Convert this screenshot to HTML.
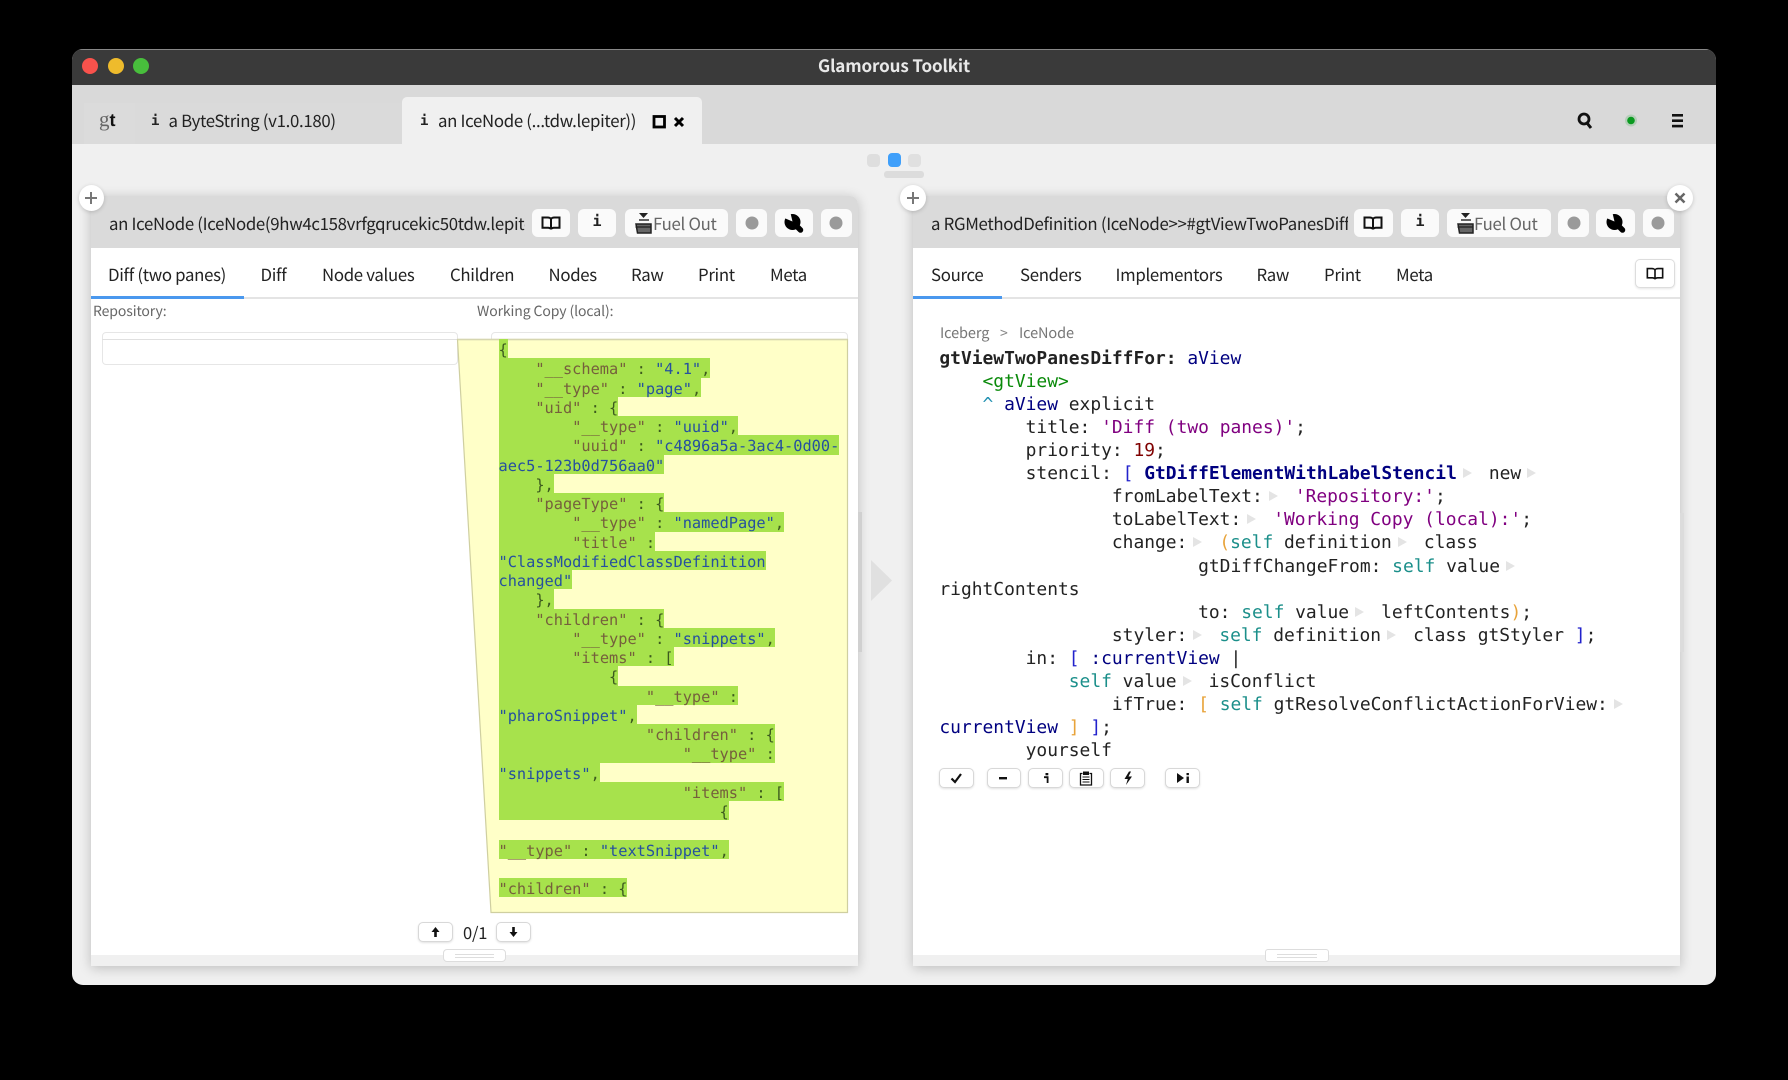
<!DOCTYPE html>
<html>
<head>
<meta charset="utf-8">
<title>Glamorous Toolkit</title>
<style>
html,body{margin:0;padding:0;width:1788px;height:1080px;background:#000;overflow:hidden}
*{box-sizing:border-box}
body{font-family:"Noto Sans CJK SC","Liberation Sans",sans-serif;text-rendering:geometricPrecision;color:#222}
.b{position:absolute}
.t{position:absolute;white-space:pre;line-height:24px;height:24px;font-size:16.8px;letter-spacing:-.3px}
.btn{position:absolute;background:#fafafa;border-radius:6px;top:209px;height:28px}
.ab{position:absolute;top:768px;height:20px;background:#fff;border:1px solid #d8d8d8;border-radius:5px;box-shadow:0 1px 2px rgba(0,0,0,.12)}
pre{margin:0}
#code{position:absolute;left:939.4px;top:346.8px;font-family:"DejaVu Sans Mono","Liberation Mono",monospace;font-size:17.92px;line-height:23.08px;color:#222}
#code i{display:inline-block;width:32px;height:11px;position:relative}
#code i:after{content:"";position:absolute;left:6px;top:0;border-left:9px solid #e4e4e4;border-top:5.5px solid transparent;border-bottom:5.5px solid transparent}
#code i.e{width:18px}
#code b{font-weight:bold}
.n{color:#000080}.tl{color:#1b8f8a}.pu{color:#800080}.og{color:#e8a33a}.bl{color:#2222cc}
#json{position:absolute;left:498.5px;top:339px;font-family:"DejaVu Sans Mono","Liberation Mono",monospace;font-size:15.3px;color:#3c5a1e}
#json div{position:relative;height:19.25px;line-height:19.25px;white-space:pre}
#json span{display:inline-block;height:19.25px;line-height:22px;background:#a7e24c;vertical-align:top}
#json u{text-decoration:none;color:#75603c}
#json s{text-decoration:none;color:#25509f}
</style>
</head>
<body>
<!-- window -->
<div class="b" style="left:72px;top:49px;width:1644px;height:936px;background:#f0f0f0;border-radius:11px;overflow:hidden">
  <div class="b" style="left:0;top:0;width:1644px;height:36px;background:#3a3a3a;border-top:1px solid #888"></div>
  <div class="b" style="left:0;top:36px;width:1644px;height:59px;background:#d9d9d9"></div>
  <div class="b" style="left:12px;top:54px;width:51px;height:41px;background:#dbdbdb"></div>
  <div class="b" style="left:63px;top:54px;width:267px;height:41px;background:#dadada"></div>
</div>
<div class="b" style="left:82px;top:58px;width:16px;height:16px;border-radius:50%;background:#f9524c"></div>
<div class="b" style="left:108px;top:58px;width:16px;height:16px;border-radius:50%;background:#eebb2c"></div>
<div class="b" style="left:133px;top:58px;width:16px;height:16px;border-radius:50%;background:#48be3c"></div>
<div class="t" style="left:72px;width:1644px;top:53px;text-align:center;color:#e8e8e8;font-weight:bold;font-size:17px;letter-spacing:-.12px">Glamorous Toolkit</div>

<!-- tabs -->
<div class="b" style="left:402px;top:97px;width:300px;height:47px;background:#f0f0f0;border-radius:5px 5px 0 0"></div>
<div class="t" style="left:99px;top:107px;font-family:'Liberation Serif',serif;font-size:21px;letter-spacing:0;color:#666">g<b style="color:#111;font-family:'Liberation Sans',sans-serif;font-size:18px">t</b></div>
<div class="t" style="left:151px;top:109px;font-family:'DejaVu Sans Mono',monospace;font-weight:bold;font-size:14px;letter-spacing:0;color:#222">i</div>
<div class="t" style="left:168.5px;top:108px">a ByteString (v1.0.180)</div>
<div class="t" style="left:420px;top:109px;font-family:'DejaVu Sans Mono',monospace;font-weight:bold;font-size:14px;letter-spacing:0;color:#222">i</div>
<div class="t" style="left:438px;top:108px">an IceNode (...tdw.lepiter))</div>
<svg class="b" style="left:650px;top:112px" width="40" height="20" viewBox="0 0 40 20"><rect x="4" y="4.5" width="10.5" height="10.5" fill="none" stroke="#000" stroke-width="2.8"/><path d="M25 6l8 8M33 6l-8 8" stroke="#000" stroke-width="3" fill="none"/></svg>

<!-- top right icons -->
<svg class="b" style="left:1570px;top:106px" width="125" height="30" viewBox="0 0 125 30">
<circle cx="14" cy="13" r="5" fill="none" stroke="#111" stroke-width="2.8"/><path d="M17 17l4 5" stroke="#111" stroke-width="3"/>
<circle cx="61" cy="14.5" r="6" fill="#0a9a20" opacity=".18"/><circle cx="61" cy="14.5" r="3.8" fill="#0a9a20"/>
<rect x="102" y="8" width="11" height="2.6" fill="#111"/><rect x="102" y="13.4" width="11" height="2.6" fill="#111"/><rect x="102" y="18.8" width="11" height="2.6" fill="#111"/>
</svg>

<!-- page dots -->
<div class="b" style="left:867px;top:154px;width:13px;height:13px;border-radius:4px;background:#dedede"></div>
<div class="b" style="left:887.5px;top:153px;width:13px;height:14px;border-radius:4px;background:#3f9ffa"></div>
<div class="b" style="left:908px;top:154px;width:13px;height:13px;border-radius:4px;background:#e0e0e0"></div>
<div class="b" style="left:884px;top:171px;width:40px;height:7px;border-radius:3px;background:#dcdcdc"></div>

<!-- LEFT PANE -->
<div class="b" style="left:91px;top:196px;width:767px;height:770px;background:#fff;box-shadow:0 2px 12px rgba(0,0,0,.22);border-radius:8px 8px 0 0;overflow:hidden">
  <div class="b" style="left:0;top:0;width:767px;height:52px;background:#dadada"></div>
  <div class="b" style="left:0;top:101px;width:767px;height:2px;background:#e4e4e4"></div>
  <div class="b" style="left:0;top:100px;width:153px;height:3px;background:#4a98ee"></div>
  <div class="b" style="left:0;top:759px;width:767px;height:11px;background:#f0f0f0"></div>
</div>
<div class="b" style="left:858px;top:512px;width:4px;height:140px;background:#d0d0d0"></div>
<div class="t" style="left:109px;top:211px;width:416px;overflow:hidden">an IceNode (IceNode(9hw4c158vrfgqrucekic50tdw.lepiter))</div>
<div class="btn" style="left:532px;width:38px"></div>
<div class="btn" style="left:578px;width:38px"></div>
<div class="btn" style="left:625px;width:103px"></div>
<div class="btn" style="left:736px;width:31px"></div>
<div class="btn" style="left:775px;width:38px"></div>
<div class="btn" style="left:821px;width:31px"></div>
<svg class="b" style="left:541px;top:214px" width="20" height="18" viewBox="0 0 20 18"><path d="M1.5 3.5h5c1.7 0 3.5.7 3.5 2.2V15.500c0-1-1.500-1.700-3-1.700H1.500zM18.500 3.500h-5c-1.700 0-3.500.7-3.500 2.200V15.500c0-1 1.500-1.700 3-1.700H18.500z" fill="none" stroke="#111" stroke-width="2"/></svg>
<div class="t" style="left:592.5px;top:209px;font-family:'DejaVu Sans Mono',monospace;font-weight:bold;font-size:15px;letter-spacing:0;color:#222">i</div>
<svg class="b" style="left:634px;top:212px" width="20" height="22" viewBox="0 0 20 22"><path d="M5 1h9l-4.500 5z" fill="#222"/><path d="M5 8h10" stroke="#333" stroke-width="1.500"/><path d="M2 12h15v9H3.500z" fill="#666" stroke="#222" stroke-width="1.500"/><path d="M1.500 15h16" stroke="#222" stroke-width="1.300"/></svg>
<div class="t" style="left:653px;top:211px;color:#666">Fuel Out</div>
<svg class="b" style="left:745px;top:216px" width="100" height="14" viewBox="0 0 100 14"><circle cx="7" cy="7" r="6.500" fill="#9a9a9a"/><circle cx="91" cy="7" r="6.500" fill="#9a9a9a"/></svg>
<svg class="b" style="left:784px;top:214px" width="20" height="19" viewBox="0 0 20 19"><circle cx="8.500" cy="8" r="8" fill="#000"/><path d="M10 9.500L16.500 16" stroke="#000" stroke-width="5.500" stroke-linecap="round"/><path d="M8.500 7.500L6.500 -1H-1V3.500z" fill="#fafafa"/></svg>
<div class="b" style="left:78.5px;top:185px;width:25px;height:26px;border-radius:50%;background:#fff;box-shadow:0 1px 4px rgba(0,0,0,.18)"></div>
<svg class="b" style="left:84px;top:191px" width="14" height="14" viewBox="0 0 14 14"><path d="M7 1v12M1 7h12" stroke="#777" stroke-width="2"/></svg>

<div class="t" style="left:108px;top:262px">Diff (two panes)</div>
<div class="t" style="left:260.5px;top:262px">Diff</div>
<div class="t" style="left:322px;top:262px">Node values</div>
<div class="t" style="left:450px;top:262px">Children</div>
<div class="t" style="left:548.5px;top:262px">Nodes</div>
<div class="t" style="left:631px;top:262px">Raw</div>
<div class="t" style="left:698px;top:262px">Print</div>
<div class="t" style="left:770px;top:262px">Meta</div>

<div class="t" style="left:93px;top:299px;font-size:14px;letter-spacing:-.1px;color:#666">Repository:</div>
<div class="t" style="left:477px;top:299px;font-size:14px;letter-spacing:-.1px;color:#666">Working Copy (local):</div>

<!-- diff boxes -->
<div class="b" style="left:102px;top:332px;width:356px;height:33px;background:#fff;border:1px solid #e6e6e6;border-radius:4px"></div>
<div class="b" style="left:102px;top:339px;width:356px;height:1px;background:#e0e0e0"></div>
<div class="b" style="left:491px;top:332px;width:357px;height:10px;background:#fff;border:1px solid #e6e6e6;border-radius:4px 4px 0 0"></div>
<svg class="b" style="left:456px;top:338px" width="394" height="577" viewBox="0 0 394 577">
<path d="M1.5 1.5H391.5V574.5H35z" fill="#ffffc8"/>
<path d="M1.5 1.5H391.5V574.5H35z" fill="none" stroke="#cfcfa0" stroke-width="1.2"/>
<path d="M1.5 1.5h390" stroke="#d6d6b0" stroke-width="1.5"/>
</svg>
<div id="json"><div style="z-index:29"><span>{</span></div><div style="z-index:28"><span>    <u>"__schema"</u> : <s>"4.1"</s>,</span></div><div style="z-index:27"><span>    <u>"__type"</u> : <s>"page"</s>,</span></div><div style="z-index:26"><span>    <u>"uid"</u> : {</span></div><div style="z-index:25"><span>        <u>"__type"</u> : <s>"uuid"</s>,</span></div><div style="z-index:24"><span>        <u>"uuid"</u> : <s>"c4896a5a-3ac4-0d00-</s></span></div><div style="z-index:23"><span><s>aec5-123b0d756aa0"</s></span></div><div style="z-index:22"><span>    },</span></div><div style="z-index:21"><span>    <u>"pageType"</u> : {</span></div><div style="z-index:20"><span>        <u>"__type"</u> : <s>"namedPage"</s>,</span></div><div style="z-index:19"><span>        <u>"title"</u> :</span></div><div style="z-index:18"><span><s>"ClassModifiedClassDefinition</s></span></div><div style="z-index:17"><span><s>changed"</s></span></div><div style="z-index:16"><span>    },</span></div><div style="z-index:15"><span>    <u>"children"</u> : {</span></div><div style="z-index:14"><span>        <u>"__type"</u> : <s>"snippets"</s>,</span></div><div style="z-index:13"><span>        <u>"items"</u> : [</span></div><div style="z-index:12"><span>            {</span></div><div style="z-index:11"><span>                <u>"__type"</u> :</span></div><div style="z-index:10"><span><s>"pharoSnippet"</s>,</span></div><div style="z-index:9"><span>                <u>"children"</u> : {</span></div><div style="z-index:8"><span>                    <u>"__type"</u> :</span></div><div style="z-index:7"><span><s>"snippets"</s>,</span></div><div style="z-index:6"><span>                    <u>"items"</u> : [</span></div><div style="z-index:5"><span>                        {</span></div><div> </div><div style="z-index:3"><span><u>"__type"</u> : <s>"textSnippet"</s>,</span></div><div> </div><div style="z-index:1"><span><u>"children"</u> : {</span></div></div>

<!-- nav -->
<div class="ab" style="left:418px;top:922px;width:35px;height:20px"></div>
<div class="ab" style="left:496px;top:922px;width:35px;height:20px"></div>
<svg class="b" style="left:428px;top:925px" width="96" height="14" viewBox="0 0 96 14"><path d="M7.5 2l-4 5h2.7v5h2.6V7h2.700z" fill="#111"/><path d="M85.500 12l-4-5h2.700V2h2.600v5h2.700z" fill="#111"/></svg>
<div class="t" style="left:463px;top:920px;font-size:16.5px;letter-spacing:-.2px">0/1</div>
<div class="b" style="left:443px;top:949px;width:63px;height:13px;background:#fff;border:1px solid #ddd;border-radius:4px"></div>
<div class="b" style="left:455px;top:954px;width:39px;height:1px;background:#ddd"></div>
<div class="b" style="left:455px;top:957px;width:39px;height:1px;background:#ddd"></div>

<!-- arrow -->
<svg class="b" style="left:871px;top:560px" width="22" height="41" viewBox="0 0 22 41"><path d="M0 0L21 20.500 0 41z" fill="#e0e0e0"/></svg>

<!-- RIGHT PANE -->
<div class="b" style="left:913px;top:196px;width:767px;height:770px;background:#fff;box-shadow:0 2px 12px rgba(0,0,0,.22);border-radius:8px 8px 0 0;overflow:hidden">
  <div class="b" style="left:0;top:0;width:767px;height:52px;background:#dadada"></div>
  <div class="b" style="left:0;top:101px;width:767px;height:2px;background:#e4e4e4"></div>
  <div class="b" style="left:0;top:100px;width:89px;height:3px;background:#4a98ee"></div>
  <div class="b" style="left:0;top:759px;width:767px;height:11px;background:#f0f0f0"></div>
</div>
<div class="b" style="left:1680px;top:513px;width:4px;height:139px;background:#dcdcdc"></div>
<div class="t" style="left:931px;top:211px;width:417px;overflow:hidden">a RGMethodDefinition (IceNode&gt;&gt;#gtViewTwoPanesDiffFor:)</div>
<div class="btn" style="left:1354px;width:39px"></div>
<div class="btn" style="left:1401px;width:38px"></div>
<div class="btn" style="left:1447px;width:104px"></div>
<div class="btn" style="left:1558px;width:31px"></div>
<div class="btn" style="left:1596px;width:39px"></div>
<div class="btn" style="left:1643px;width:31px"></div>
<svg class="b" style="left:1363px;top:214px" width="20" height="18" viewBox="0 0 20 18"><path d="M1.5 3.500h5c1.700 0 3.500.7 3.500 2.200V15.500c0-1-1.500-1.700-3-1.700H1.500zM18.500 3.500h-5c-1.700 0-3.500.7-3.500 2.200V15.500c0-1 1.500-1.700 3-1.700H18.500z" fill="none" stroke="#111" stroke-width="2"/></svg>
<div class="t" style="left:1415.5px;top:209px;font-family:'DejaVu Sans Mono',monospace;font-weight:bold;font-size:15px;letter-spacing:0;color:#222">i</div>
<svg class="b" style="left:1456px;top:212px" width="20" height="22" viewBox="0 0 20 22"><path d="M5 1h9l-4.500 5z" fill="#222"/><path d="M5 8h10" stroke="#333" stroke-width="1.500"/><path d="M2 12h15v9H3.500z" fill="#666" stroke="#222" stroke-width="1.500"/><path d="M1.500 15h16" stroke="#222" stroke-width="1.300"/></svg>
<div class="t" style="left:1474px;top:211px;color:#666">Fuel Out</div>
<svg class="b" style="left:1567px;top:216px" width="100" height="14" viewBox="0 0 100 14"><circle cx="7" cy="7" r="6.500" fill="#9a9a9a"/><circle cx="91" cy="7" r="6.500" fill="#9a9a9a"/></svg>
<svg class="b" style="left:1606px;top:214px" width="20" height="19" viewBox="0 0 20 19"><circle cx="8.500" cy="8" r="8" fill="#000"/><path d="M10 9.500L16.500 16" stroke="#000" stroke-width="5.500" stroke-linecap="round"/><path d="M8.500 7.500L6.500 -1H-1V3.500z" fill="#fafafa"/></svg>
<div class="b" style="left:900px;top:185px;width:26px;height:26px;border-radius:50%;background:#fff;box-shadow:0 1px 4px rgba(0,0,0,.18)"></div>
<svg class="b" style="left:906px;top:191px" width="14" height="14" viewBox="0 0 14 14"><path d="M7 1v12M1 7h12" stroke="#777" stroke-width="2"/></svg>
<div class="b" style="left:1667px;top:185px;width:26px;height:26px;border-radius:50%;background:#fff;box-shadow:0 1px 4px rgba(0,0,0,.18)"></div>
<svg class="b" style="left:1673px;top:191px" width="14" height="14" viewBox="0 0 14 14"><path d="M2.500 2.500l9 9M11.500 2.500l-9 9" stroke="#666" stroke-width="2.500"/></svg>

<div class="t" style="left:931px;top:262px">Source</div>
<div class="t" style="left:1020px;top:262px">Senders</div>
<div class="t" style="left:1115.5px;top:262px">Implementors</div>
<div class="t" style="left:1256.5px;top:262px">Raw</div>
<div class="t" style="left:1324px;top:262px">Print</div>
<div class="t" style="left:1396px;top:262px">Meta</div>
<div class="b" style="left:1635px;top:259px;width:40px;height:29px;background:#fff;border:1px solid #ddd;border-radius:5px;box-shadow:0 1px 2px rgba(0,0,0,.1)"></div>
<svg class="b" style="left:1646px;top:265px" width="18" height="17" viewBox="0 0 20 18"><path d="M1.500 3.500h5c1.700 0 3.500.7 3.500 2.200V15.500c0-1-1.500-1.700-3-1.700H1.500zM18.500 3.500h-5c-1.700 0-3.500.7-3.500 2.200V15.500c0-1 1.500-1.700 3-1.700H18.500z" fill="none" stroke="#111" stroke-width="1.800"/></svg>

<div class="t" style="left:940px;top:321px;font-size:14.5px;letter-spacing:-.1px;color:#777">Iceberg</div>
<div class="t" style="left:1000px;top:321px;font-size:14px;color:#888">&gt;</div>
<div class="t" style="left:1019px;top:321px;font-size:14.5px;letter-spacing:-.1px;color:#777">IceNode</div>

<pre id="code"><b>gtViewTwoPanesDiffFor:</b> <span class="n">aView</span>
    <span style="color:#0a8a0a">&lt;gtView&gt;</span>
    <span style="color:#1e8fb0">^</span> <span class="n">aView</span> explicit
        title: <span class="pu">'Diff (two panes)'</span>;
        priority: <span style="color:#7f0000">19</span>;
        stencil: <span class="bl">[</span> <b class="n">GtDiffElementWithLabelStencil</b><i></i>new<i class="e"></i>
                fromLabelText:<i></i><span class="pu">'Repository:'</span>;
                toLabelText:<i></i><span class="pu">'Working Copy (local):'</span>;
                change:<i></i><span class="og">(</span><span class="tl">self</span> definition<i></i>class
                        gtDiffChangeFrom: <span class="tl">self</span> value<i class="e"></i>
rightContents
                        to: <span class="tl">self</span> value<i></i>leftContents<span class="og">)</span>;
                styler:<i></i><span class="tl">self</span> definition<i></i>class gtStyler <span class="bl">]</span>;
        in: <span class="bl">[</span> <span class="n">:currentView</span> |
            <span class="tl">self</span> value<i></i>isConflict
                ifTrue: <span class="og">[</span> <span class="tl">self</span> gtResolveConflictActionForView:<i class="e"></i>
<span class="n">currentView</span> <span class="og">]</span> <span class="bl">]</span>;
        yourself</pre>

<!-- action buttons -->
<div class="ab" style="left:939px;width:35px"></div>
<div class="ab" style="left:987px;width:34px"></div>
<div class="ab" style="left:1028px;width:35px"></div>
<div class="ab" style="left:1069px;width:35px"></div>
<div class="ab" style="left:1110px;width:35px"></div>
<div class="ab" style="left:1165px;width:35px"></div>
<svg class="b" style="left:939px;top:768px" width="262" height="20" viewBox="0 0 262 20">
<path d="M12.500 10.500l3.500 3.500 6-8" fill="none" stroke="#111" stroke-width="2.200"/>
<rect x="60" y="9" width="8" height="2.400" fill="#111"/>
<rect x="106.500" y="5" width="2.800" height="2.300" fill="#111"/><path d="M105 9.200h3.600V15" fill="none" stroke="#111" stroke-width="1.800"/>
<path d="M143.500 5.500h-2v11.500h11V5.500h-2" fill="none" stroke="#111" stroke-width="1.300"/><rect x="144" y="3.500" width="6" height="3.500" fill="#111"/><path d="M143.500 9h7M143.500 11.500h7M143.500 14h7" stroke="#111" stroke-width="1.100"/>
<path d="M190 3.500l-4.500 7.500h3.300l-1.800 6 6-8.500h-3.500l2.500-5z" fill="#111"/>
<path d="M238 5l7 5-7 5z" fill="#111"/><rect x="247.500" y="5" width="2.400" height="2.200" fill="#111"/><rect x="247.500" y="8.500" width="2.400" height="6.500" fill="#111"/>
</svg>

<div class="b" style="left:1265px;top:949px;width:64px;height:13px;background:#fff;border:1px solid #ddd;border-radius:3px"></div>
<div class="b" style="left:1277px;top:954px;width:40px;height:1px;background:#ddd"></div>
<div class="b" style="left:1277px;top:957px;width:40px;height:1px;background:#ddd"></div>
</body>
</html>
